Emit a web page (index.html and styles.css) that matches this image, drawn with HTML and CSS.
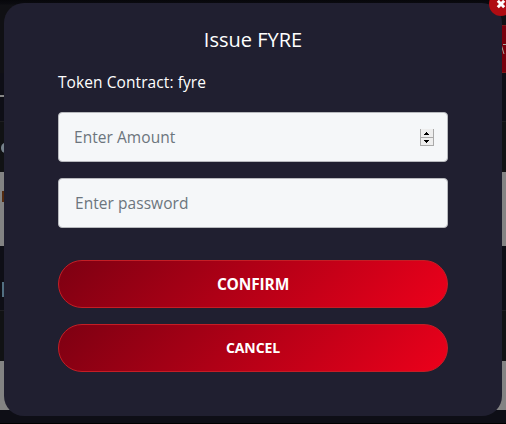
FILE: index.html
```html
<!DOCTYPE html>
<html lang="en">
<head>
<meta charset="utf-8">
<title>Issue FYRE</title>
<link rel="stylesheet" href="styles.css">
</head>
<body>
<div class="page" aria-hidden="true">
  <div class="row topbar"></div>
  <div class="row nav"><span class="nav-button"><svg width="5" height="10" viewBox="0 0 5 10"><path d="M0 0 3 10M2 0.5H5" stroke="#aaa49b" fill="none"/></svg></span></div>
  <div class="row heading"><span class="rule"></span></div>
  <div class="row toolbar"><span class="dot"></span></div>
  <div class="row light"><span class="mark"></span></div>
  <div class="row section"><span class="tab"></span></div>
  <div class="row toolbar second"></div>
  <div class="row light short"></div>
  <div class="row footer"></div>
</div>
<main class="modal">
  <button class="close" aria-label="Close">
    <svg width="10" height="10" viewBox="0 0 10 10"><path d="M1.8 1.8 8.2 8.2M8.2 1.8 1.8 8.2" stroke="#fff" stroke-width="3" fill="none"/></svg>
  </button>
  <h1 class="title">Issue FYRE</h1>
  <p class="contract">Token Contract: fyre</p>
  <div class="field amount">
    <span class="placeholder">Enter Amount</span>
    <span class="spinner">
      <svg width="14" height="17" viewBox="0 0 14 17" shape-rendering="crispEdges">
        <path fill="#eee" d="M0 0h14v17H0z"/>
        <path fill="#aaa" d="M0 0h1v17H0zM13 0h1v17h-1zM0 8h14v1H0zM0 16h14v1H0z"/>
        <path fill="#000" d="M6 3h1v1H6zM5 4h3v1H5zM4 5h5v1H4zM4 11h5v1H4zM5 12h3v1H5zM6 13h1v1H6z"/>
      </svg>
    </span>
  </div>
  <div class="field password"><span class="placeholder">Enter password</span></div>
  <div class="actions">
    <button class="action confirm">CONFIRM</button>
    <button class="action cancel">CANCEL</button>
  </div>
</main>
</body>
</html>
```
FILE: styles.css
```css
* { box-sizing: border-box; }
body {
  margin: 0;
  height: 424px;
  overflow: hidden;
  padding: 3px 4px 8px;
  background: #0e0e16;
  color: #fff;
  font-family: "Open Sans", "Noto Sans", sans-serif;
}
.page {
  position: absolute;
  inset: 0;
  display: flex;
  flex-direction: column;
}
.row { flex: none; display: flex; align-items: flex-start; }
.topbar { height: 25px; background: linear-gradient(#07070b, #0b0b10 4px, #101014 5px); }
.nav { height: 48px; background: #101014; justify-content: flex-end; }
.nav-button { width: 5px; height: 48px; padding-top: 18px; background: #78000d; border: solid #7c1a1a; border-width: 1px 0; }
.nav-button svg { display: block; }
.heading { height: 49px; border-bottom: 1px solid #1d1d20; padding-top: 22px; }
.rule { width: 4px; height: 2px; background: #858585; }
.toolbar { height: 50px; background: #111214; padding: 21px 0 0 1px; }
.toolbar.second .dot { display: none; }
.dot { width: 8px; height: 10px; border-radius: 50%; background: #76818b; }
.light { height: 74px; background: #838383; padding: 19px 0 0 2px; }
.mark { width: 3px; height: 11px; background: #542b10; }
.section { height: 65px; border-bottom: 1px solid #1e1e22; padding: 36px 0 0 2px; }
.tab { width: 3px; height: 15px; background: #526f82; }
.light.short { height: 49px; }
.footer { height: 14px; border-bottom: 1px solid #000; }
.modal {
  position: relative;
  width: 498px;
  height: 413px;
  padding: 23px 54px 0;
  border-radius: 20px;
  background: #201f30;
}
.close {
  position: absolute;
  top: -11px;
  left: 485px;
  width: 24px;
  height: 24px;
  padding: 0;
  border: 0;
  border-radius: 50%;
  background: #b00c12;
  display: grid;
  place-items: center;
}
.title {
  margin: 0;
  height: 28px;
  font-size: 20px;
  line-height: 28px;
  font-weight: 400;
  text-align: center;
}
.contract {
  margin: 16px 0 18px;
  height: 24px;
  font-size: 15.5px;
  line-height: 24px;
  letter-spacing: 0.08px;
}
.field {
  height: 50px;
  margin-bottom: 16px;
  padding: 0 13px 0 15px;
  border: 1px solid #b7b9bd;
  border-radius: 4px;
  background: #f5f7f9;
  color: #6c757d;
  font-size: 15.5px;
  letter-spacing: 0.05px;
  display: flex;
  align-items: center;
  justify-content: space-between;
}
.password { padding-left: 16px; }
.spinner { display: flex; }
.actions { display: grid; gap: 16px; padding-top: 16px; }
.action {
  height: 48px;
  padding: 0;
  border: 1px solid #c41e25;
  border-radius: 24px;
  background: linear-gradient(135deg, #7d0012, #ec001b);
  color: #fff;
  font-family: inherit;
  font-weight: 700;
}
.confirm { font-size: 15.5px; letter-spacing: -0.15px; }
.cancel { font-size: 14px; letter-spacing: -0.1px; padding-bottom: 2px; }
```
